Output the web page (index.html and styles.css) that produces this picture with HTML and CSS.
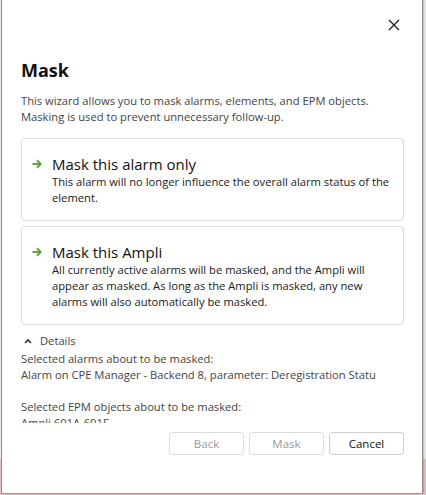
FILE: index.html
```html
<!DOCTYPE html>
<html>
<head>
<meta charset="utf-8">
<link rel="stylesheet" href="styles.css">
</head>
<body>
<div class="dialog">
  <div class="top">
    <button class="close" aria-label="Close">
      <svg width="12" height="12" viewBox="0 0 12 12"><path d="M1 1 L11 11 M11 1 L1 11" stroke="#222" stroke-width="1.4" fill="none"/></svg>
    </button>
  </div>
  <div class="content">
    <h1 class="title">Mask</h1>
    <p class="intro">This wizard allows you to mask alarms, elements, and EPM objects.<br>Masking is used to prevent unnecessary follow-up.</p>
    <div class="option first">
      <div class="opt-head">
        <svg class="arrow" width="10" height="10" viewBox="0 0 10 10"><path d="M0.5 5 H8.5 M5 1.3 L8.7 5 L5 8.7" stroke="#5aa63a" stroke-width="2" fill="none"/></svg>
        <span class="opt-title">Mask this alarm only</span>
      </div>
      <div class="opt-desc">This alarm will no longer influence the overall alarm status of the element.</div>
    </div>
    <div class="option">
      <div class="opt-head">
        <svg class="arrow" width="10" height="10" viewBox="0 0 10 10"><path d="M0.5 5 H8.5 M5 1.3 L8.7 5 L5 8.7" stroke="#5aa63a" stroke-width="2" fill="none"/></svg>
        <span class="opt-title">Mask this Ampli</span>
      </div>
      <div class="opt-desc">All currently active alarms will be masked, and the Ampli will appear as masked. As long as the Ampli is masked, any new alarms will also automatically be masked.</div>
    </div>
    <div class="details-toggle">
      <svg class="caret" width="8" height="6" viewBox="0 0 8 6"><path d="M1 5 L4 2 L7 5" stroke="#333" stroke-width="1.6" fill="none"/></svg>
      <span>Details</span>
    </div>
    <div class="details">
      <div>Selected alarms about to be masked:</div>
      <div>Alarm on CPE Manager - Backend 8, parameter: Deregistration Status</div>
      <div>&nbsp;</div>
      <div>Selected EPM objects about to be masked:</div>
      <div>Ampli 601A-601F</div>
    </div>
    <div class="buttons">
      <button class="btn" disabled>Back</button>
      <button class="btn" disabled>Mask</button>
      <button class="btn">Cancel</button>
    </div>
  </div>
</div>
</body>
</html>
```
FILE: styles.css
```css
html, body {
  margin: 0;
  padding: 0;
}
body {
  width: 426px;
  height: 495px;
  overflow: hidden;
  background: linear-gradient(to bottom, #eeeeee 0, #eeeeee 459px, #e8c4c8 459px, #e8c4c8 495px);
  font-family: "Open Sans", "Noto Sans", sans-serif;
}
.dialog {
  box-sizing: border-box;
  width: 422px;
  height: 494px;
  margin-left: 1px;
  background: #fff;
  border-left: 1px solid #8c8c8c;
  border-right: 1px solid #8c8c8c;
  border-bottom: 1px solid #9a9a9a;
  box-shadow: 1px 0 2px rgba(0,0,0,0.25);
}
.top {
  height: 50px;
  display: flex;
  justify-content: flex-end;
  align-items: flex-start;
  padding-right: 20px;
}
.close {
  margin-top: 17px;
  width: 16px;
  height: 16px;
  padding: 0;
  border: none;
  background: transparent;
  display: flex;
  align-items: center;
  justify-content: center;
}
.content {
  padding: 0 18px 0 19px;
}
.title {
  margin: 8px 0 0;
  font-size: 18px;
  line-height: 24px;
  font-weight: 700;
  color: #111;
}
.intro {
  margin: 11px 0 0;
  font-size: 11.2px;
  line-height: 16px;
  color: #444;
}
.option {
  border: 1px solid #dcdcdc;
  border-radius: 4px;
  padding: 15px 10px 14px 10px;
  margin-top: 5px;
}
.option.first {
  margin-top: 13px;
}
.opt-head {
  display: flex;
  align-items: center;
  gap: 10px;
}
.arrow {
  flex: none;
}
.opt-title {
  font-size: 15px;
  line-height: 20px;
  color: #111;
}
.opt-desc {
  margin-left: 20px;
  font-size: 11.2px;
  line-height: 16px;
  color: #1a1a1a;
}
.details-toggle {
  display: flex;
  align-items: center;
  gap: 8px;
  margin-top: 8px;
  padding-left: 3px;
  font-size: 11.2px;
  line-height: 16px;
  color: #444;
}
.details {
  margin-top: 2px;
  margin-right: 28px;
  height: 72px;
  overflow: hidden;
  white-space: nowrap;
  font-size: 11.2px;
  line-height: 16px;
  color: #444;
}
.buttons {
  display: flex;
  justify-content: flex-end;
  gap: 5px;
  margin-top: 9px;
}
.btn {
  width: 75px;
  height: 23px;
  border: 1px solid #cfcfcf;
  border-radius: 3px;
  background: #fff;
  font-family: inherit;
  font-size: 11.5px;
  color: #111;
  padding: 0;
}
.btn:disabled {
  color: #9a9a9a;
  border-color: #dedede;
}
```
